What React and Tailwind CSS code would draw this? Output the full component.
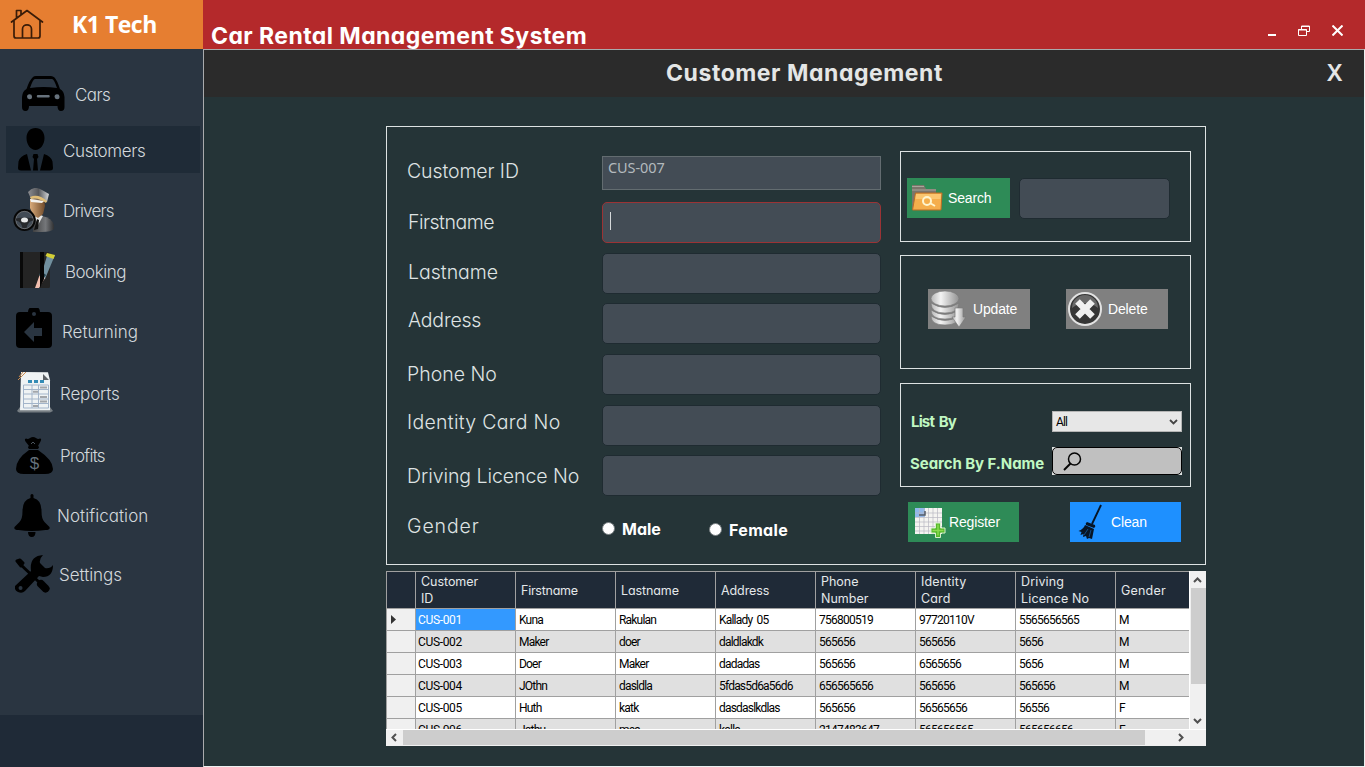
const gothic = "font-[Inter,sans-serif] [font-feature-settings:'cv11']";

function HomeIcon() {
  return (
    <svg className="h-[32px] w-[34px] shrink-0" viewBox="0 0 34 32" fill="none" stroke="#3a1c08" strokeWidth="1.7" strokeLinejoin="round" strokeLinecap="round">
      <path d="M1.500 13 17 1.500 32.500 13M4 11.500v15.500a2 2 0 0 0 2 2h22a2 2 0 0 0 2-2V11.500M6.500 9V1.500h4.500v4M12.500 28.500V20c0-5.500 9-5.500 9 0v8.500" />
    </svg>
  );
}

function CarIcon() {
  return (
    <svg className="h-[35px] w-[43px] shrink-0" viewBox="0 0 43 35">
      <path fillRule="evenodd" d="M11 1Q12 0 14 0h15q2 0 3.500 1.500Q35 4 38 13q4 2 4.500 8v10q0 4-3.500 4t-3.500-5H7q0 5-3.500 5T0 31V21q.500-6 4.500-8Q7.500 4 11 1ZM13 3q-2 0-5 9 13.500-2 27 0-3-9-5-9Z" />
      <path d="M7.500 18.200a2.500 2.500 0 1 0 .1 5 2.500 2.500 0 0 0-.1-5ZM35 18.200a2.500 2.500 0 1 0 .1 5 2.500 2.500 0 0 0-.1-5ZM16 19h10.500a1 1 0 0 1 0 2.500H16A1 1 0 0 1 16 19Z" fill="#67727c" />
    </svg>
  );
}

function PersonIcon() {
  return (
    <svg className="h-[43px] w-[35px] shrink-0" viewBox="0 0 35 43">
      <path d="M17.500 0C23 0 26.500 4 26.500 10c0 7-4.500 12-9 12s-9-5-9-12C8.500 4 12 0 17.500 0ZM9 26q-7 2-8.500 7.500L0 40q0 2.500 3 2.500h10L9 26Zm17 0q7 2 8.500 7.500L35 40q0 2.500-3 2.500H22L26 26ZM15.500 26h4l1 3-1.500 2 1 11.500h-5L16 31l-1.500-2Z" />
    </svg>
  );
}

function DriverIcon() {
  return (
    <svg className="h-[44px] w-[42px] shrink-0" viewBox="0 0 42 44">
      <defs>
        <linearGradient id="skin"><stop stopColor="#d9ab7b" /><stop offset="1" stopColor="#6f4a2a" /></linearGradient>
        <linearGradient id="suit"><stop stopColor="#3f4041" /><stop offset=".6" stopColor="#75777a" /><stop offset="1" stopColor="#303133" /></linearGradient>
        <linearGradient id="cap"><stop stopColor="#8b8c90" /><stop offset=".5" stopColor="#55575b" /><stop offset="1" stopColor="#d2d4d6" /></linearGradient>
      </defs>
      <path d="M20 31q4-3 9-3 10 2 12 9v4q-3 3-12 3H20Z" fill="url(#suit)" />
      <path d="m22 29 3-3 5 2-5 9Z" fill="#e8e8e6" />
      <path d="m24 31 2 1-1 9-4 1Z" fill="#111" />
      <path d="M17 11h14l1 7-2 8-5 4-5-3-3-7Z" fill="url(#skin)" />
      <path d="M15 4q6-7 14-2l7 4-2 8-4-2-12-1Z" fill="url(#cap)" />
      <path d="M17 9q8-4 17 4l-1 2q-8-6-15-4Z" fill="#e0bd76" />
      <path d="m17 11 14 2-2 2-11-1Z" fill="#f2f2f0" />
      <circle cx="11.500" cy="32" r="10" fill="#59616a" fillOpacity=".5" stroke="#070707" strokeWidth="2.2" />
      <circle cx="11.500" cy="32" r="8.700" fill="none" stroke="#8b8c8c" strokeWidth=".6" />
      <path d="M3 30.500q8.500-2 17 0v2q-5 .5-6.500 7.500h-4Q8 33 3 32.500Z" fill="#26282b" />
      <ellipse cx="11.500" cy="32" rx="3.500" ry="2.500" fill="#e7e8e8" />
    </svg>
  );
}

function BookingIcon() {
  return (
    <svg className="h-[37px] w-[35px] shrink-0" viewBox="0 0 35 37">
      <rect width="30" height="36" y="0" rx="1.500" fill="#242424" />
      <path d="M0 0h3v36H0z" fill="#090909" />
      <path d="m27 4 8-1-10 24-6 3Z" fill="#71909f" />
      <path d="m27 1 8 2-1.500 4-8-3Z" fill="#d4cf35" />
      <path d="m20 22 5 4-6 10h-4Z" fill="#f1beae" />
      <path d="m21 19 5 4-3 4-4-4Z" fill="#23404a" />
      <path d="M20 0h4v27l-4 9z" fill="#050505" />
    </svg>
  );
}

function ReturnIcon() {
  return (
    <svg className="h-[40px] w-[36px] shrink-0" viewBox="0 0 36 40">
      <path fillRule="evenodd" d="M4 4h8a6 6 0 0 1 12 0h8a4 4 0 0 1 4 4v28a4 4 0 0 1-4 4H4a4 4 0 0 1-4-4V8a4 4 0 0 1 4-4ZM18 4a2 2 0 1 0 0 4 2 2 0 0 0 0-4ZM8 24l10 10v-6h8v-8h-8v-6Z" />
    </svg>
  );
}

function ReportIcon() {
  return (
    <svg className="h-[42px] w-[36px] shrink-0" viewBox="0 0 36 42">
      <path d="M0 40 3 36h30l3 4-3 1.500H2Z" fill="#777e83" />
      <path d="m4 1 27 .2 2 8v30H3Z" fill="#eff3f4" />
      <path d="M26 3v6h6Z" fill="#5d6266" />
      <path d="M1 9 9 1M2 6l4-5" stroke="#c98a4d" strokeWidth="1" />
      <path d="M11 9h4v3h-4zM17 9h4v3h-4zM23 9h4v3h-4z" fill="#338bb5" />
      <path d="M6.500 14h25v23h-25ZM6.500 18.500h25M6.500 23h25M6.500 28h25M6.500 32.500h25M15 14v23M21.500 14v23" stroke="#a3b5ca" fill="none" />
      <path d="M16 20.700h5M23 16.500h7M23 26h7M16 35h5M23 30.500h7" stroke="#a2a6aa" strokeWidth="2" />
    </svg>
  );
}

function ProfitIcon() {
  return (
    <svg className="h-[37px] w-[37px] shrink-0" viewBox="0 0 37 37">
      <path d="M10 1.500q2 1 4-.5 3-2 6 0 2 1.500 4 .5 2 0 .5 3L22 9q2 1 0 3h-9q-2-2 0-3L9.500 4.500Q8 2 10 1.500ZM13 13h9q15 10 15 19 0 5-8 5H8q-8 0-8-5 0-10 13-19Z" />
      <path d="m15 7 2-2 2 2" stroke="#4a545d" fill="none" />
      <text x="18.500" y="31.500" textAnchor="middle" fontFamily="Liberation Sans" fontSize="17" fill="#65707a">$</text>
    </svg>
  );
}

function BellSolid() {
  return (
    <svg className="h-[43px] w-[36px] shrink-0" viewBox="0 0 36 43">
      <path d="M16.500 1q1.500-2 3 0v3q8 2 8 13 0 8 3 11l5 5q1 3-4 3-14 2-27 0-5 0-4-3l5-5q3-3 3-11 0-11 8-13ZM14 38h7.500q0 5-3.700 5T14 38Z" />
    </svg>
  );
}

function ToolsIcon() {
  return (
    <svg className="h-[38px] w-[38px] shrink-0" viewBox="0 0 38 38">
      <path d="m4 8 21 20" stroke="#000" strokeWidth="3" />
      <path d="m2 6 3-1 3 3-2 3Z" stroke="#000" strokeLinejoin="round" strokeWidth="3" />
      <path d="m26 29 4.500 4.500" stroke="#000" strokeWidth="8" strokeLinecap="round" />
      <path fillRule="evenodd" d="M28 0q-4 4-3 8l5 5q5 1 8-3 0 12-10 12l-4-1L10 36q-3 3-7 1t-3-6L16 16q-2-15 12-16ZM5.500 31a2 2 0 1 0 .1 4 2 2 0 0 0-.1-4Z" />
    </svg>
  );
}

function FolderIcon() {
  return (
    <svg className="h-[28px] w-[32px] shrink-0" viewBox="0 0 32 28">
      <path d="M1 1h12l2 4h10v6h-8v14H1Z" fill="#7b756b" />
      <path d="M1 2.500h12M1 6h24" stroke="#aaa69b" />
      <path d="M4.500 9H31l-1 17H1.500Z" fill="#f5ae4c" stroke="#b96d25" />
      <path d="M5 10h25l-.4 5H4.500Z" fill="#fbc66f" />
      <circle cx="16" cy="17" r="4" fill="none" stroke="#fff5cf" strokeWidth="2" />
      <path d="m19 19 5 3" stroke="#fff5cf" strokeWidth="2" />
    </svg>
  );
}

function DatabaseIcon() {
  return (
    <svg className="h-[38px] w-[36px] shrink-0" viewBox="0 0 36 38">
      <defs><linearGradient id="disk"><stop stopColor="#b7b7b7" /><stop offset=".35" stopColor="#f3f3f3" /><stop offset="1" stopColor="#929292" /></linearGradient></defs>
      <g fill="url(#disk)" stroke="#777" strokeWidth=".6">
        <path d="M1 26q0 9 14 9t14-9q-14 9-28 0ZM1 20q0 9 14 9t14-9q-14 9-28 0ZM1 13q0 10 14 10t14-10q-14 9-28 0Z" />
        <ellipse cx="15" cy="8.500" rx="14" ry="7.500" />
        <path d="M25 18h8v9h3L29 37l-7-10h3Z" />
      </g>
    </svg>
  );
}

function DeleteIcon() {
  return (
    <svg className="h-[36px] w-[36px] shrink-0" viewBox="0 0 36 36">
      <circle cx="18" cy="18" r="16" fill="#363636" stroke="#e2e2e2" strokeWidth="2" />
      <path d="M5 17Q18 7 31 17A13 13 0 0 0 5 17" fill="#686868" />
      <path d="m10.500 10.500 15 15M25.500 10.500l-15 15" stroke="#efefef" strokeWidth="6.500" />
    </svg>
  );
}

function SheetIcon() {
  return (
    <svg className="h-[31px] w-[32px] shrink-0" viewBox="0 0 32 31">
      <path d="M1 1h27v26H1Z" fill="#f5f4f1" />
      <path d="M1 1h10v9H1Z" fill="#91b8eb" />
      <path d="M1 6h27M1 10.500h27M1 15h27M1 19.500h27M1 24h27M5.500 1v26M10 1v26M14.500 1v26M19 1v26M23.500 1v26" stroke="#b9b8c2" strokeWidth=".7" />
      <path d="M5 8h6V4" fill="none" stroke="#555c68" strokeWidth="1.500" />
      <path d="M21.500 16h5v5H31v5h-4.500v4.500h-5V26H17v-5h4.500Z" fill="#55b82d" stroke="#d9f0cc" />
      <path d="M24 17.500v11M18.500 23.500h11" stroke="#8bdc50" strokeWidth="1.500" />
    </svg>
  );
}

function BroomIcon() {
  return (
    <svg className="h-[36px] w-[24px] shrink-0" viewBox="0 0 24 36">
      <path d="m23 1-9 19" stroke="#071525" strokeWidth="1.900" />
      <path d="m9 18 8 3q1 2-1 3l-8-3q-1-2 1-3Z" fill="#071525" />
      <path d="m7 21 9 4-2 10-3-1-2 1-1-3-3 1 .5-3-3 1 1-3-3-1q5-2 6.500-6Z" fill="#071525" />
      <path d="m10 25-4 6M13 26l-2 7" stroke="#1870ca" strokeWidth=".6" />
    </svg>
  );
}

const navItems = [
  { label: "Cars", Icon: CarIcon, box: "h-[55px] pl-[22px]", text: "ml-[10px] pt-[5px] tracking-[-0.6px]" },
  { label: "Customers", Icon: PersonIcon, box: "h-[47px] mt-[4px] ml-[6px] mr-[3px] pl-[12px] bg-[#1f2b37]", text: "ml-[10px] pt-[5px] tracking-[-0.38px]" },
  { label: "Drivers", Icon: DriverIcon, box: "h-[44px] mt-[15px] pl-[13px]", text: "ml-[8px] pt-[3px] tracking-[-0.8px]" },
  { label: "Booking", Icon: BookingIcon, box: "h-[38px] mt-[19px] pl-[20px]", text: "ml-[10px] pt-[6px] tracking-[-0.5px]" },
  { label: "Returning", Icon: ReturnIcon, box: "h-[40px] mt-[19px] pl-[16px]", text: "ml-[10px] pt-[9px]" },
  { label: "Reports", Icon: ReportIcon, box: "h-[42px] mt-[23px] pl-[17px]", text: "ml-[7px] pt-[6px] tracking-[-0.15px]" },
  { label: "Profits", Icon: ProfitIcon, box: "h-[37px] mt-[24px] pl-[16px]", text: "ml-[7px] pt-[3px] tracking-[-0.75px]" },
  { label: "Notification", Icon: BellSolid, box: "h-[43px] mt-[20px] pl-[14px]", text: "ml-[7px] pt-[3px] tracking-[0.05px]" },
  { label: "Settings", Icon: ToolsIcon, box: "h-[38px] mt-[18px] pl-[15px]", text: "ml-[6px] pt-[3px] tracking-[-0.05px]" },
];

function Sidebar() {
  return (
    <aside className="flex h-full w-[203px] shrink-0 flex-col bg-[#2a3541]">
      <div className="flex h-[49px] shrink-0 items-center bg-[#e67e31] pl-[10px]">
        <HomeIcon />
        <span className="ml-[28px] whitespace-nowrap font-['Open_Sans',sans-serif] text-[23px] font-bold tracking-[-0.5px] text-white">K1 Tech</span>
      </div>
      <nav className="flex flex-1 flex-col pt-[17px]">
        {navItems.map(({ label, Icon, box, text }) => (
          <div key={label} className={"flex shrink-0 items-center first:mb-px " + box}>
            <Icon />
            <span className={`${gothic} whitespace-nowrap text-[17px] font-light text-[#d3d8dc] ${text}`}>{label}</span>
          </div>
        ))}
      </nav>
      <div className="h-[52px] shrink-0 bg-[#1f2a37]" />
    </aside>
  );
}

const plainInput = "h-[41px] w-[279px] rounded-[5px] border border-[#1f2b31]";
const fields = [
  { label: "Customer ID", row: "h-[34px] mt-[29px]", text: "-mt-[4px] tracking-[-0.1px]", input: "h-[34px] w-[279px] border border-[#636c70]", value: "CUS-007" },
  { label: "Firstname", row: "h-[41px] mt-[12px]", text: "pl-px -mt-px tracking-[-0.5px]", input: "h-[41px] w-[279px] rounded-[5px] border border-[#9b3335]", caret: true },
  { label: "Lastname", row: "h-[41px] mt-[10px]", text: "pl-px -mt-[3px]", input: plainInput },
  { label: "Address", row: "h-[41px] mt-[9px]", text: "pl-px -mt-[8px] tracking-[-0.2px]", input: plainInput },
  { label: "Phone No", row: "h-[41px] mt-[10px]", text: "-mt-[2px]", input: plainInput },
  { label: "Identity Card No", row: "h-[41px] mt-[10px]", text: "-mt-[7px] tracking-[0.3px]", input: plainInput },
  { label: "Driving Licence No", row: "h-[41px] mt-[9px]", text: "mt-0 tracking-[-0.05px]", input: plainInput },
];

function FieldLabel({ children, place }) {
  return <span className={`${gothic} whitespace-nowrap text-[19.5px] font-light leading-[24px] text-[#dfe3e3] ${place}`}>{children}</span>;
}

function CustomerForm() {
  return (
    <div className="flex w-[494px] shrink-0 flex-col pl-[20px]">
      {fields.map((f) => (
        <div key={f.label} className={"flex items-center " + f.row}>
          <div className="flex w-[195px] shrink-0 items-center"><FieldLabel place={f.text}>{f.label}</FieldLabel></div>
          <div className={"bg-[#434c55] " + f.input}>
            {f.value && <div className="pl-[5px] pt-px font-['Noto_Sans',sans-serif] text-[14.5px] leading-[18px] tracking-[-0.1px] text-[#b3babe]">{f.value}</div>}
            {f.caret && <div className="ml-[7px] mt-[9px] h-[18px] w-px bg-[#d5d8da]" />}
          </div>
        </div>
      ))}
      <div className={`${gothic} mt-[16px] flex h-[28px] items-center text-[16px] font-bold text-white`}>
        <div className="flex w-[195px] shrink-0"><FieldLabel place="tracking-[0.9px]">Gender</FieldLabel></div>
        <span className="mt-[4px] size-[13px] rounded-full border border-[#767d80] bg-white" />
        <span className="ml-[7px] mt-[5px] w-[87px]">Male</span>
        <span className="mt-[6px] size-[13px] rounded-full border border-[#767d80] bg-white" />
        <span className="ml-[7px] mt-[7px] tracking-[0.35px]">Female</span>
      </div>
    </div>
  );
}

const btn = "flex h-[40px] items-center font-['Liberation_Sans',Arial,sans-serif] text-[14px] tracking-[-0.15px] text-white";

function ActionPanel() {
  return (
    <div className="flex w-[291px] shrink-0 flex-col pt-[24px] ml-[19px]">
      <div className="flex h-[91px] items-start border border-[#dde2e2] pl-[6px] pt-[26px]">
        <button className={btn + " w-[103px] bg-[#2e8b57] pl-[4px]"}><FolderIcon /><span className="ml-[5px]">Search</span></button>
        <div className="ml-[9px] h-[41px] w-[151px] rounded-[5px] border border-[#1f2b31] bg-[#434c55]" />
      </div>
      <div className="mt-[13px] flex h-[114px] items-start border border-[#dde2e2] pl-[27px] pt-[33px]">
        <button className={btn + " w-[102px] bg-[#808080] pl-[2px]"}><DatabaseIcon /><span className="ml-[7px]">Update</span></button>
        <button className={btn + " ml-[36px] w-[102px] bg-[#808080] pl-[1px]"}><DeleteIcon /><span className="ml-[5px]">Delete</span></button>
      </div>
      <div className={`${gothic} mt-[14px] flex h-[104px] flex-col border border-[#dde2e2] pl-[9px] pt-[27px] font-bold text-[#c0f8c2]`}>
        <div className="flex h-[21px] items-center">
          <span className="ml-px w-[141px] pt-[2px] text-[15px] tracking-[-0.85px] [word-spacing:2px]">List By</span>
          <div className="flex h-[21px] w-[130px] items-center justify-between border border-[#b5b5b5] bg-[#e7e7e7] pl-[3px] pr-[3px] font-[Roboto,sans-serif] text-[12px] font-normal text-black">
            <span className="tracking-[-0.9px]">All</span>
            <svg className="h-[8px] w-[9px]" viewBox="0 0 9 8" fill="none" stroke="#454545" strokeWidth="1.800"><path d="m1 2 3.500 3.500L8 2" /></svg>
          </div>
        </div>
        <div className="mt-[15px] flex h-[28px] items-center">
          <span className="mt-[6px] w-[142px] whitespace-nowrap text-[15px] tracking-[-0.06px]">Search By F.Name</span>
          <div className="flex h-[28px] w-[130px] items-center bg-[#dfe2e2]">
            <div className="flex h-[28px] w-[130px] items-center rounded-[5px] border border-black bg-[#c0c0c0] pl-[10px]">
              <svg className="h-[19px] w-[19px]" viewBox="0 0 19 19" fill="none" stroke="#050505" strokeWidth="1.500"><circle cx="11.500" cy="7" r="6" /><path d="M7.500 11.500 1 18" strokeWidth="1.900" /></svg>
            </div>
          </div>
        </div>
      </div>
      <div className="mt-[15px] flex pl-[8px]">
        <button className={btn + " w-[111px] bg-[#2e8b57] pl-[6px]"}><SheetIcon /><span className="ml-[3px]">Register</span></button>
        <button className={btn + " ml-[51px] w-[111px] bg-[#1e90ff] pl-[8px]"}><BroomIcon /><span className="ml-[9px]">Clean</span></button>
      </div>
    </div>
  );
}

const columns = [
  { name: "Customer\nID", fit: "tracking-[-0.05px]" },
  { name: "Firstname", fit: "tracking-[-0.25px]" },
  { name: "Lastname", fit: "tracking-[-0.1px]" },
  { name: "Address", fit: "tracking-[-0.1px]" },
  { name: "Phone\nNumber", fit: "tracking-[0px]" },
  { name: "Identity\nCard", fit: "tracking-[0.15px]" },
  { name: "Driving\nLicence No", fit: "tracking-[0.15px]" },
  { name: "Gender", fit: "tracking-[0.2px]" },
];
const rows = [
  ["CUS-001", "Kuna", "Rakulan", "Kallady 05", "756800519", "97720110V", "5565656565", "M"],
  ["CUS-002", "Maker", "doer", "daldlakdk", "565656", "565656", "5656", "M"],
  ["CUS-003", "Doer", "Maker", "dadadas", "565656", "6565656", "5656", "M"],
  ["CUS-004", "JOthn", "dasldla", "5fdas5d6a56d6", "656565656", "565656", "565656", "M"],
  ["CUS-005", "Huth", "katk", "dasdaslkdlas", "565656", "56565656", "56556", "F"],
  ["CUS-006", "Jathu", "mes", "kalla", "2147483647", "565656565", "565656656", "F"],
];
const grid = "grid grid-cols-[29px_repeat(7,100px)_74px]";

function cellFit(column) {
  if (column === 0) return "pl-[2px] tracking-[-0.35px]";
  if (column < 4) return "pl-[3px] tracking-[-0.8px] [word-spacing:2px]";
  return "pl-[3px] tracking-[-0.75px]";
}

function Chevron({ turn }) {
  return <svg className={"h-[9px] w-[9px] " + turn} viewBox="0 0 9 9" fill="none" stroke="#505050" strokeWidth="2"><path d="m1 6 3.500-3.500L8 6" /></svg>;
}

function CustomerTable() {
  return (
    <div className="mt-[6px] flex h-[175px] w-[820px] flex-col bg-[#f0f0f0]">
      <div className="flex h-[158px]">
        <div className="h-[158px] w-[803px] shrink-0 overflow-hidden border-l border-t border-[#a0a0a0]">
          <div className={`${grid} ${gothic} h-[37px] bg-[#1f2a37] text-[12.5px] leading-[17px] text-[#e4e8ea]`}>
            <div className="border-b border-r border-[#a0a0a0]" />
            {columns.map((c) => (
              <div key={c.name} className={"flex items-center whitespace-pre border-b border-r border-[#a0a0a0] pl-[5px] " + c.fit}>{c.name}</div>
            ))}
          </div>
          {rows.map((r, i) => (
            <div key={r[0]} className={`${grid} h-[22px] font-[Roboto,sans-serif] text-[12px] text-black ${i % 2 ? "bg-[#e0e0e0]" : "bg-white"}`}>
              <div className="flex items-center border-b border-r border-[#a0a0a0] bg-[#f0f0f0] pl-[4px]">
                {i === 0 && <svg className="h-[9px] w-[6px]" viewBox="0 0 6 9"><path d="M0 0v9l5-4.500Z" fill="#333" /></svg>}
              </div>
              {r.map((v, j) => (
                <div key={j} className={`flex items-center whitespace-nowrap border-b border-r border-[#a0a0a0] ${cellFit(j)} ${i === 0 && j === 0 ? "bg-[#3399ff] text-white" : ""}`}>{v}</div>
              ))}
            </div>
          ))}
        </div>
        <div className="flex w-[17px] flex-col items-center border-l border-white bg-[#f0f0f0] pt-[5px]">
          <Chevron turn="-translate-x-px" />
          <div className="mt-[3px] h-[96px] w-[15px] bg-[#cdcdcd]" />
          <div className="mt-[32px] -translate-x-px"><Chevron turn="rotate-180" /></div>
        </div>
      </div>
      <div className="flex h-[17px] items-center border-t border-white pb-px pl-[4px]">
        <Chevron turn="-rotate-90" />
        <div className="ml-[4px] h-[15px] w-[742px] bg-[#cdcdcd]" />
        <div className="ml-[31px] flex"><Chevron turn="rotate-90" /></div>
      </div>
    </div>
  );
}

export default function App() {
  return (
    <div className="flex h-[767px] w-[1365px] overflow-hidden bg-[#253437]">
      <Sidebar />
      <main className="flex min-w-0 flex-1 flex-col">
        <header className="flex h-[49px] shrink-0 justify-between bg-[#b4292b] text-white">
          <h1 className={`${gothic} whitespace-nowrap pl-[8px] pt-[22px] text-[23px] font-bold leading-[28px] tracking-[0.43px]`}>Car Rental Management System</h1>
          <div className="flex items-start pr-[22px] pt-[24px]">
            <span className="mt-[10px] h-[2px] w-[8px] bg-white" />
            <svg className="ml-[22px] mt-px h-[12px] w-[12px]" viewBox="0 0 12 12" fill="none" stroke="#fff"><path d="M3.500 4V1h8v5.500H9M3 1.500h9M.500 4.500h8v6h-8ZM0 5h9" /></svg>
            <svg className="ml-[22px] mt-px h-[11px] w-[11px]" viewBox="0 0 11 11" stroke="#fff" strokeWidth="2"><path d="m.500.500 10 10M10.500.500l-10 10" /></svg>
          </div>
        </header>
        <div className="flex flex-1 flex-col border border-b-[#eef0f0] border-l-[#a9aaac] border-r-[#eef0f0] border-t-[#a9aaac]">
          <div className={`${gothic} flex h-[47px] shrink-0 bg-[#2b2b2b] text-[#e4e6e6]`}>
            <h2 className="flex-1 pl-[78px] pt-[9px] text-center text-[23px] font-bold leading-[28px] tracking-[0.55px]">Customer Management</h2>
            <span className="w-[37px] pt-[7px] font-['Noto_Sans',sans-serif] text-[24px] font-semibold leading-[30px]">X</span>
          </div>
          <div className="flex flex-col pl-[182px] pt-[29px]">
            <section className="flex h-[439px] w-[820px] border border-[#dde2e2]">
              <CustomerForm />
              <ActionPanel />
            </section>
            <CustomerTable />
          </div>
        </div>
      </main>
    </div>
  );
}
